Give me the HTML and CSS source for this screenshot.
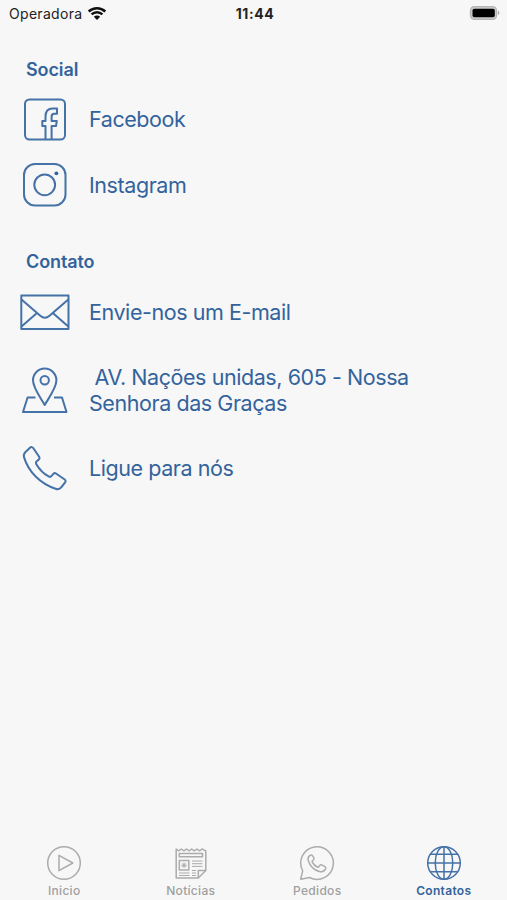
FILE: index.html
```html
<!DOCTYPE html>
<html lang="pt-BR">
<head>
  <meta charset="UTF-8">
  <meta name="viewport" content="width=device-width, initial-scale=1.0">
  <title>Contatos</title>
  <link rel="stylesheet" href="styles.css">
</head>
<body>
  <header class="status-bar">
    <div class="carrier">
      <span class="carrier-name">Operadora</span>
      <svg class="wifi" viewBox="0 0 20 15">
        <path d="M1.700 5.500C6.400 1 13.600 1 18.300 5.500M4.600 8.300c3-2.900 7.800-2.900 10.800 0" fill="none" stroke="#111" stroke-width="2.500"/>
        <path d="M10 14l-3.200-3.200c1.800-1.600 4.600-1.600 6.400 0z" fill="#111"/>
      </svg>
    </div>
    <span class="clock">11:44</span>
    <svg class="battery" viewBox="0 0 32 16">
      <rect x="1.500" y="1.700" width="26" height="12.600" rx="3.800" fill="#ccc" stroke="#b5b5b5" stroke-width="1.300"/>
      <rect x="3.500" y="3.700" width="22.300" height="8.600" rx="1.800" fill="#000"/>
      <path d="M28.800 5.800c2 .6 2 3.800 0 4.400z" fill="#aaa"/>
    </svg>
  </header>

  <main class="content">
    <section class="group">
      <h2 class="group-title">Social</h2>
      <a class="item">
        <svg class="item-icon" viewBox="0 0 50 50">
          <rect x="5" y="5.500" width="40" height="40" rx="4.500"/>
          <path d="M25.500 45V32h-3.200v-5h3.200v-4.500c0-5.300 2.500-8 7.200-8h4.300v5.300h-2.600c-2 0-2.800.9-2.800 2.600V27h5.200l-.8 5h-4.400v13"/>
        </svg>
        <span>Facebook</span>
      </a>
      <a class="item">
        <svg class="item-icon" viewBox="0 0 50 50">
          <rect x="4" y="4" width="41.500" height="41.500" rx="11"/>
          <circle cx="24.700" cy="24.800" r="10.400"/>
          <circle class="solid" cx="36.400" cy="13.300" r="1.900"/>
        </svg>
        <span>Instagram</span>
      </a>
    </section>

    <section class="group contact">
      <h2 class="group-title">Contato</h2>
      <a class="item email">
        <svg class="item-icon" viewBox="0 0 50 50">
          <rect x="1.300" y="8.500" width="47.200" height="33.500"/>
          <path d="M1.500 12.500l18.800 16.200c3 2.600 6.200 2.600 9.200 0l18.800-16.200M1.500 39.500l15.200-13.300M48.300 39.500L33.100 26.200"/>
        </svg>
        <span>Envie-nos um E-mail</span>
      </a>
      <a class="item">
        <svg class="item-icon" viewBox="0 0 50 50">
          <path d="M24.700 40C20.500 32.500 13 23 13 15.300a11.700 11.700 0 0 1 23.400 0C36.400 23 29 32.500 24.700 40z"/>
          <circle cx="24.700" cy="15.200" r="4.200"/>
          <path d="M15.500 32.500H7.600L3 47h43.500L42 32.500h-8"/>
        </svg>
        <span class="address"> AV. Nações unidas, 605 - Nossa
Senhora das Graças</span>
      </a>
      <a class="item">
        <svg class="item-icon" viewBox="0 0 50 50">
          <path d="M10.200 4.600c1-.8 2.300-.6 3 .4l6.100 9c.6 1 .3 1.700-.5 2.500l-2.300 2c-.7.7-.8 1.500-.3 2.400 3.300 5.800 7.200 9.700 12.800 12.700.9.500 1.700.3 2.300-.4l2.100-2.300c.8-.9 1.700-1 2.600-.4l8.700 6c1 .7 1.200 1.900.4 2.900l-3.700 4.800c-1.500 2-3.400 2.500-5.800 1.600C20.600 40.800 8.600 29.300 4 14.100c-.6-2-.1-3.700 1.500-5.200z"/>
        </svg>
        <span>Ligue para nós</span>
      </a>
    </section>
  </main>

  <nav class="tab-bar">
    <a class="tab">
      <svg class="tab-icon" viewBox="0 0 36 36">
        <circle cx="18" cy="18" r="16.300"/>
        <path d="M13 10.300v15.400L26.800 18z"/>
      </svg>
      <span>Inicio</span>
    </a>
    <a class="tab">
      <svg class="tab-icon" viewBox="0 0 36 36">
        <path d="M3.200 33V4l2.500 1.800L8.300 4l2.600 1.800L13.500 4l2.600 1.800L18.700 4l2.600 1.800L23.900 4l2.600 1.800L29.100 4l3.700 1.800V25.500L25.300 33z"/>
        <path d="M25.300 33v-7.500h7.500M6.300 8.500h23.200v3.300H6.300zM6.300 15.500h9.500v9.500H6.300z"/>
        <path class="fine" d="M19 16h10.500M19 18.700h10.500M19 21.400h10.500M6 28h10.500M6 30.500h10.500M19 25.500h4M19 28h4M19 30.500h4M11 17.500v5.500M8.300 20.300h5.500M9 18.300l4 4M13 18.300l-4 4"/>
      </svg>
      <span>Notícias</span>
    </a>
    <a class="tab">
      <svg class="tab-icon" viewBox="0 0 36 36">
        <path d="M1.700 34.200l2-8.400A16.300 16.300 0 1 1 10.500 32.500z"/>
        <path d="M11.600 10.200c-2.200 1-3 3.200-2.200 5.700 1.700 5 5.800 9.200 11 10.600 2.700.7 5.300-.5 6.300-3 .3-.9.100-1.500-.7-1.900l-3.300-1.700c-.8-.4-1.400-.2-1.900.5l-1 1.300c-.4.500-.9.600-1.500.3-2.300-1-3.900-2.600-5-4.800-.3-.6-.2-1.100.3-1.500l1-.9c.5-.5.6-1 .3-1.700l-1.500-2.600c-.4-.7-1.100-.8-1.800-.3z"/>
      </svg>
      <span>Pedidos</span>
    </a>
    <a class="tab active">
      <svg class="tab-icon" viewBox="0 0 36 36">
        <circle cx="18" cy="18" r="16.300"/>
        <ellipse cx="18" cy="18" rx="8.800" ry="16.300"/>
        <path d="M18 1.700v32.600M1.700 18h32.600M4.500 9.300h27M4.500 26.700h27"/>
      </svg>
      <span>Contatos</span>
    </a>
  </nav>
</body>
</html>
```
FILE: styles.css
```css
* {
  box-sizing: border-box;
}

body {
  display: flex;
  flex-direction: column;
  height: 100vh;
  margin: 0;
  overflow: hidden;
  background: #f7f7f7;
  color: #33639c;
  font-family: Inter, "Liberation Sans", sans-serif;
}

.status-bar {
  display: grid;
  grid-template-columns: 1fr auto 1fr;
  align-items: center;
  height: 26px;
  padding: 0 6px 0 9px;
  color: #222;
}

.carrier {
  display: flex;
  align-items: center;
  gap: 5px;
  font-size: 14px;
  letter-spacing: 0.3px;
}

.wifi {
  width: 20px;
  height: 15px;
}

.clock {
  font-size: 14px;
  font-weight: 700;
  letter-spacing: 0.6px;
}

.battery {
  justify-self: end;
  width: 32px;
  height: 16px;
}

.content {
  flex: 1;
  padding: 32px 20px 0;
}

.group-title {
  height: 24px;
  margin: 0 0 4px 6px;
  font-size: 18px;
  font-weight: 600;
  line-height: 24px;
  letter-spacing: -0.1px;
}

.item {
  display: flex;
  align-items: center;
  gap: 19px;
  height: 66px;
  font-size: 21.5px;
  line-height: 26px;
  letter-spacing: -0.43px;
}

.item-icon {
  flex: none;
  width: 50px;
  height: 50px;
  fill: none;
  stroke: #4572a7;
  stroke-width: 2;
  stroke-linejoin: round;
}

.item-icon .solid {
  fill: #33639c;
  stroke: none;
}

.contact {
  margin-top: 32px;
}

.contact .group-title {
  margin-bottom: -2px;
}

.contact .item {
  height: 78px;
}

.contact .email {
  height: 79px;
}

.address {
  white-space: pre;
}

.tab-bar {
  display: grid;
  grid-template-columns: repeat(4, 1fr);
  height: 56px;
  padding: 1px 0 0 1px;
}

.tab {
  display: flex;
  flex-direction: column;
  align-items: center;
  gap: 2px;
  color: #a0a0a0;
  font-size: 12px;
  font-weight: 500;
  line-height: 16px;
  letter-spacing: 0.3px;
}

.tab-icon {
  width: 36px;
  height: 36px;
  fill: none;
  stroke: #acacac;
  stroke-width: 1.5;
  stroke-linejoin: round;
}

.tab-icon .fine {
  stroke-width: 1;
}

.active {
  color: #33639c;
  font-weight: 600;
}

.active .tab-icon {
  stroke: #4572a7;
}
```
